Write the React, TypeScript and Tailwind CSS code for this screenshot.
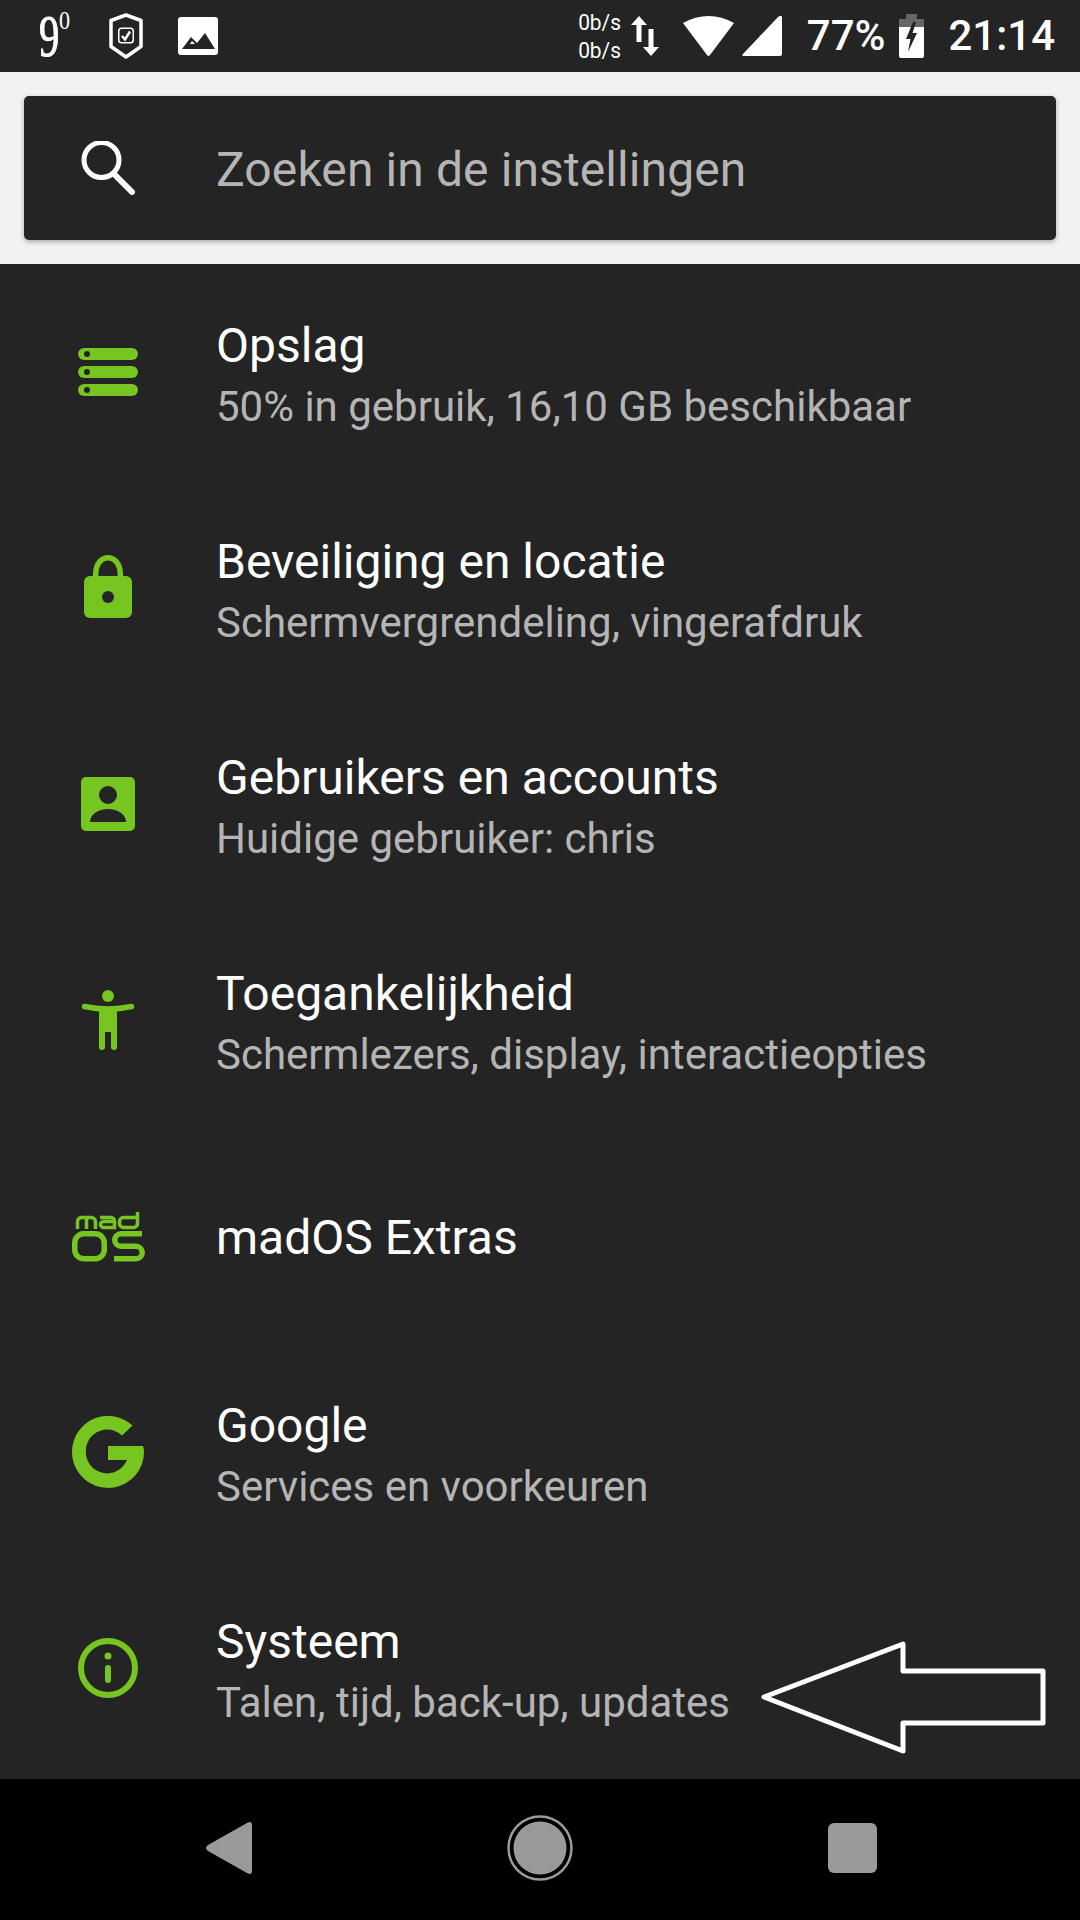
import React from "react";

const green = "#76c520";
const bg = "#242424";

const StorageIcon = () => (
  <svg width="72" height="72" viewBox="0 0 72 72">
    {[9, 27, 45].map((y) => (
      <g key={y}>
        <rect x="6" y={y} width="60" height="12" rx="6" fill={green} />
        <circle cx="15" cy={y + 6} r="3" fill={bg} />
      </g>
    ))}
  </svg>
);

const LockIcon = () => (
  <svg width="72" height="72" viewBox="0 0 72 72">
    <path d="M23.75 22v-4a12.25 15.25 0 0 1 24.5 0v4" fill="none" stroke={green} strokeWidth="5.5" />
    <rect x="12" y="21" width="48" height="42" rx="6" fill={green} />
    <circle cx="36" cy="42" r="6" fill={bg} />
  </svg>
);

const AccountIcon = () => (
  <svg width="72" height="72" viewBox="0 0 72 72">
    <rect x="9" y="6" width="54" height="54" rx="5" fill={green} />
    <circle cx="36" cy="24" r="9" fill={bg} />
    <path d="M18 51c0-8 9-13 18-13s18 5 18 13z" fill={bg} />
  </svg>
);

const AccessIcon = () => (
  <svg width="72" height="72" viewBox="0 0 72 72">
    <circle cx="36" cy="9" r="6" fill={green} />
    <path d="M12.5 19.5Q36 24.5 59.5 19.5" fill="none" stroke={green} strokeWidth="5.5" strokeLinecap="round" />
    <path d="M27 21H45V60a3 3 0 0 1-6 0V45H33V60a3 3 0 0 1-6 0Z" fill={green} />
  </svg>
);

const MadIcon = () => (
  <svg width="72" height="72" viewBox="0 0 72 72" fill="none" stroke={green} className="overflow-visible">
    <g strokeWidth="3.5">
      <path d="M5.5 26V18.500a4 4 0 0 1 4-4H19a4.500 4.500 0 0 1 4.500 4.500V26M14.500 15V26" />
      <path d="M28 14.500H39a3.500 3.500 0 0 1 3.500 3.500V24.500H32a3.500 3 0 0 1 0-6H42" />
      <path d="M65.500 9V20.500a4 4 0 0 1-4 4H51.500a4 4 0 0 1-4-4V18.500a4 4 0 0 1 4-4H65" />
    </g>
    <rect x="2.750" y="30.750" width="29.500" height="25" rx="9" strokeWidth="5.5" />
    <path d="M70 30.750H49a6.250 6.250 0 0 0 0 12.500H64a6.250 6.250 0 0 1 0 12.500H42" strokeWidth="5.5" />
  </svg>
);

const GoogleIcon = () => (
  <svg width="72" height="72" viewBox="0 3 72 72" className="overflow-visible">
    <path d="M36 30H71Q72 33 72 36A36 36 0 1 1 60.500 9.500L50 19.500A21.500 22 0 1 0 55 44H36Z" fill={green} />
  </svg>
);

const InfoIcon = () => (
  <svg width="72" height="72" viewBox="0 0 72 72">
    <circle cx="36" cy="33" r="27" fill="none" stroke={green} strokeWidth="6" />
    <circle cx="36" cy="21" r="3.500" fill={green} />
    <rect x="33" y="30" width="6" height="18" rx="3" fill={green} />
  </svg>
);

const rows = [
  { icon: <StorageIcon />, title: "Opslag", sub: "50% in gebruik, 16,10 GB beschikbaar" },
  { icon: <LockIcon />, title: "Beveiliging en locatie", sub: "Schermvergrendeling, vingerafdruk" },
  { icon: <AccountIcon />, title: "Gebruikers en accounts", sub: "Huidige gebruiker: chris" },
  { icon: <AccessIcon />, title: "Toegankelijkheid", sub: "Schermlezers, display, interactieopties" },
  { icon: <MadIcon />, title: "madOS Extras" },
  { icon: <GoogleIcon />, title: "Google", sub: "Services en voorkeuren" },
  { icon: <InfoIcon />, title: "Systeem", sub: "Talen, tijd, back-up, updates" },
];

const StatusBar = () => (
  <div className="flex h-[72px] items-center bg-[#242424] pl-[39px] pr-[25px] text-white">
    <div className="flex w-[31px] items-start font-['Liberation_Serif',serif] leading-none">
      <span className="origin-left scale-x-[0.68] text-[60px] [-webkit-text-stroke:1px_#fff]">9</span>
      <span className="-ml-[10px] mt-[2px] origin-left scale-x-[0.85] text-[26px]">0</span>
    </div>
    <svg className="ml-[39px]" width="34" height="46" viewBox="0 0 34 46">
      <path d="M17 2L32 7.500V33.500L17 44L2 33.500V7.500Z" fill="none" stroke="#fff" strokeWidth="3.500" strokeLinejoin="round" />
      <rect x="9" y="14.500" width="16" height="16" rx="3.500" fill="#fff" />
      <rect x="10.500" y="16" width="13" height="13" rx="2" fill={bg} />
      <path d="M13 23l3 3.500 5-8" fill="none" stroke="#fff" strokeWidth="2.500" />
    </svg>
    <svg className="ml-[35px]" width="40" height="38" viewBox="0 0 40 38">
      <rect width="40" height="38" rx="3" fill="#fff" />
      <path d="M4 32L13 20L19 26L27 16L37 32Z" fill={bg} />
      <path d="M12 27l2-3 3 3z" fill="#fff" />
    </svg>
    <div className="ml-auto flex flex-col pt-[2px] font-['Roboto',sans-serif] text-[22px] leading-[28px] [transform:scaleX(0.95)]">
      <span>0b/s</span>
      <span>0b/s</span>
    </div>
    <svg className="ml-[8px]" width="30" height="42" viewBox="0 0 30 42">
      <path d="M9 1L17 10H11.500V27H6.500V10H1Z" fill="#fff" />
      <path d="M21 41L29 32H23.500V14H18.500V32H13Z" fill="#fff" />
    </svg>
    <svg className="ml-[23px]" width="51" height="42" viewBox="0 0 51 42">
      <path d="M0 8Q25.500-6 51 8L27 40Q25.500 42 24 40Z" fill="#fff" />
    </svg>
    <svg className="ml-[8px]" width="40" height="40" viewBox="0 0 40 40">
      <path d="M40 2V38Q40 40 38 40H2Q-1 40 1 38L36 1Q40-2 40 2Z" fill="#fff" />
    </svg>
    <span className="ml-[25px] font-['Roboto',sans-serif] text-[42px] font-medium leading-none">77%</span>
    <svg className="ml-[14px]" width="25" height="44" viewBox="0 0 25 44">
      <path d="M7 0H18V5H25V13H0V5H7Z" fill="#666" />
      <path d="M0 13H25V42Q25 44 23 44H2Q0 44 0 42Z" fill="#fff" />
      <path d="M14 8L7 25H11.500L9 38L18 19H13.500L17 8Z" fill={bg} />
    </svg>
    <span className="ml-[24px] font-['Roboto',sans-serif] text-[42px] font-medium leading-none">21:14</span>
  </div>
);

export default function App() {
  return (
    <div className="relative flex h-[1920px] w-[1080px] flex-col overflow-hidden bg-[#242424] font-['Roboto',sans-serif]">
      <StatusBar />
      <div className="flex h-[192px] items-center bg-[#f2f2f2] px-[24px]">
        <div className="flex h-[144px] w-full items-center rounded-[5px] bg-[#242424] shadow-[0_2px_5px_rgba(0,0,0,0.3)]">
          <svg className="ml-[57px]" width="54" height="54" viewBox="0 0 54 54" fill="none" stroke="#fff">
            <circle cx="20.500" cy="19" r="17.500" strokeWidth="5" />
            <path d="M33 33L51 51" strokeWidth="6" strokeLinecap="round" />
          </svg>
          <span className="ml-[81px] pt-[4px] text-[48px] leading-none tracking-[0.1px] text-[#b5b5b5]">Zoeken in de instellingen</span>
        </div>
      </div>
      <div className="flex-1 pt-[3px]">
        {rows.map((r) => (
          <div key={r.title} className="flex h-[216px] items-center">
            <div className="flex w-[216px] justify-center">{r.icon}</div>
            <div className={r.sub ? "flex flex-col pt-[1px]" : "flex flex-col pb-[4px]"}>
              <span className="text-[48px] leading-[61px] text-white">{r.title}</span>
              {r.sub && <span className="text-[42px] leading-[61px] text-[#b5b5b5]">{r.sub}</span>}
            </div>
          </div>
        ))}
      </div>
      <div className="flex h-[141px] items-center bg-black pb-[3px] pl-[205px]">
        <svg width="47" height="52" viewBox="0 0 47 52">
          <path d="M42 1Q47-2 47 4V48Q47 54 42 51L3 29Q-1 26 3 23Z" fill="#9a9a9a" />
        </svg>
        <svg className="ml-[255px]" width="66" height="66" viewBox="0 0 66 66">
          <circle cx="33" cy="33" r="31.500" fill="none" stroke="#9a9a9a" strokeWidth="2.500" />
          <circle cx="33" cy="33" r="26.500" fill="#9a9a9a" />
        </svg>
        <div className="ml-[255px] h-[50px] w-[49px] rounded-[6px] bg-[#9a9a9a]" />
      </div>
      <svg className="absolute left-[760px] top-[1640px]" width="288" height="116" viewBox="0 0 288 116" fill="none" stroke="#fff" strokeWidth="5" strokeLinejoin="round">
        <path d="M4 57L143 4V31H283V83H143V111Z" />
      </svg>
    </div>
  );
}
